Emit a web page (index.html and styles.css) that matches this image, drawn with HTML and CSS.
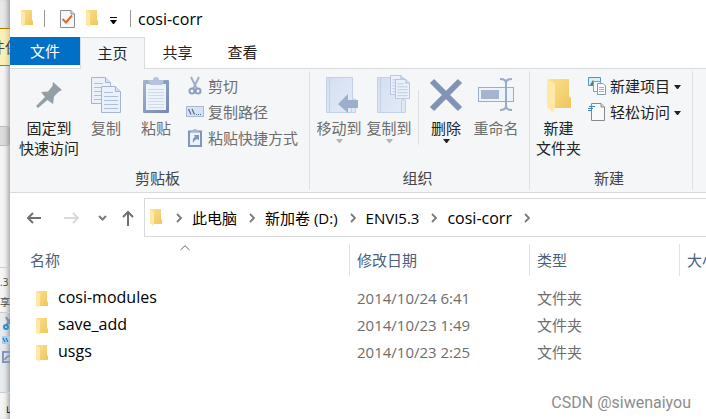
FILE: index.html
```
<!DOCTYPE html>
<html lang="zh-CN">
<head>
  <meta charset="UTF-8">
  <title>cosi-corr</title>
  <link rel="stylesheet" href="styles.css">
</head>
<body>

  <!-- 共用图标 -->
  <svg class="defs" width="0" height="0">
    <defs>
      <linearGradient id="gold" x1="0" y1="0" x2="1" y2="1">
        <stop offset="0" stop-color="#fce18e"/>
        <stop offset="1" stop-color="#efc55e"/>
      </linearGradient>
      <linearGradient id="board" x1="0" y1="0" x2="1" y2="1">
        <stop offset="0" stop-color="#a3b4d1"/>
        <stop offset="1" stop-color="#7488ae"/>
      </linearGradient>
      <linearGradient id="pale" x1="0" y1="0" x2="1" y2="1">
        <stop offset="0" stop-color="#d3dff2"/>
        <stop offset="1" stop-color="#e2eaf6"/>
      </linearGradient>
      <symbol id="folder" viewBox="0 0 12 17">
        <path d="M0 0H11V10L12 11V15H3L0 15Z" fill="url(#gold)"/>
        <path d="M0 0L4 3V13L3 17L0 14Z" fill="#ffe9a6"/>
      </symbol>
      <symbol id="chevron" viewBox="0 0 6 10">
        <path d="M1 1L5 5L1 9" fill="none" stroke="#7a7a7a" stroke-width="1.8"/>
      </symbol>
      <symbol id="drop" viewBox="0 0 7 4">
        <path d="M0 0H7L4 4H3Z" fill="currentColor"/>
      </symbol>
      <symbol id="page" viewBox="0 0 20 27">
        <path d="M.5 .5H14.500L19.500 5.500V26.500H.5Z" fill="#eaf1fb" stroke="#a3b5d1"/>
        <path d="M14.500 .5V5.500H19.500" fill="#d5e0f0" stroke="#a3b5d1"/>
        <path d="M3 6.500H12M3 10.500H17M3 14.500H17M3 18.500H17M3 22.500H17" stroke="#aebfd8"/>
      </symbol>
    </defs>
  </svg>

  <!-- 后面的窗口 -->
  <div class="behind">
    <div class="behind-top"></div>
    <div class="behind-note">件保</div>
    <div class="behind-body"></div>
    <div class="behind-bar"></div>
    <div class="behind-page"></div>
    <div class="behind-title"><span>.3</span><span>享</span></div>
    <div class="behind-tools">
      <svg width="8" height="13" viewBox="0 0 8 13"><path d="M4 0L8 7M8 2L4 9" stroke="#7c8ba0" stroke-width="2"/><circle cx="4" cy="10" r="2" fill="none" stroke="#2f8ccc" stroke-width="2"/></svg>
      <svg width="8" height="8" viewBox="0 0 8 8"><rect width="8" height="8" fill="#9fd0ee"/><path d="M1 2L3 6M4 2L6 6" stroke="#315a80"/></svg>
      <svg width="8" height="13" viewBox="0 0 8 13"><path d="M8 2H1V12H8M3 10Q4 6 8 6" fill="none" stroke="#8294bb" stroke-width="2"/></svg>
    </div>
    <div class="behind-foot">山</div>
  </div>

  <div class="window">

    <div class="titlebar">
      <svg width="12" height="17"><use href="#folder"/></svg>
      <span class="title-sep"></span>
      <svg class="check" width="15" height="18" viewBox="0 0 15 18">
        <path d="M.5 .5H11L14.500 4V17.500H.5Z" fill="#f7f8f8" stroke="#8a8f94"/>
        <path d="M11 .5V4H14.500" fill="#ddd" stroke="#8a8f94"/>
        <path d="M2.500 9L6 12.500L12 5.500" fill="none" stroke="#e8642c" stroke-width="2"/>
      </svg>
      <svg width="12" height="17"><use href="#folder"/></svg>
      <svg class="customize" width="7" height="7" viewBox="0 0 7 7"><path d="M0 .5H7" stroke="#000"/><path d="M0 3H7L4 7H3Z"/></svg>
      <span class="title-sep"></span>
      <span class="path-name">cosi-corr</span>
    </div>

    <div class="tabs">
      <button class="tab tab-file">文件</button>
      <button class="tab tab-active">主页</button>
      <button class="tab">共享</button>
      <button class="tab">查看</button>
    </div>

    <div class="ribbon">
      <div class="group group-clipboard">
        <div class="tools">
          <button class="big dark pin">
            <svg width="26" height="36" viewBox="0 0 26 36">
              <path d="M17 5L26 13L23 14.500L18 19.500L17 27L11.500 23L2 31L0 29L9 20L5 15L12 14.500L16.500 9Z" fill="#949fa5"/>
            </svg>
            <span>固定到<br>快速访问</span>
          </button>
          <button class="big">
            <svg width="30" height="36" viewBox="0 0 30 36">
              <use href="#page" width="20" height="27"/>
              <use href="#page" x="10" y="9" width="20" height="27"/>
            </svg>
            <span>复制</span>
          </button>
          <button class="big">
            <svg width="26" height="36" viewBox="0 0 26 36">
              <rect y="3" width="26" height="33" rx="1" fill="url(#board)"/>
              <rect x="3" y="7" width="20" height="26" fill="#edf3fb"/>
              <path d="M5 12.500H21M5 15.500H21M5 18.500H21M5 21.500H21M5 24.500H21M5 27.500H21M5 30.500H21" stroke="#cddaea"/>
              <path d="M5 3H10Q10 0 13 0T16 3H21L19 8H7Z" fill="#b4c4dc"/>
            </svg>
            <span>粘贴</span>
          </button>
          <div class="small-list">
            <button class="small">
              <svg width="18" height="18" viewBox="0 0 18 18">
                <path d="M5 0L11 12M13 0L7 12" stroke="#9fb0c9" stroke-width="2"/>
                <circle cx="6" cy="14" r="2.500" fill="none" stroke="#8c9fc0" stroke-width="2"/>
                <circle cx="12" cy="14" r="2.500" fill="none" stroke="#8c9fc0" stroke-width="2"/>
              </svg>剪切
            </button>
            <button class="small">
              <svg width="18" height="18" viewBox="0 0 18 18">
                <rect x=".5" y="3.500" width="17" height="10" fill="#d5e3f4" stroke="#a9bad3"/>
                <path d="M2.500 6L5 11.500M6 6L8.500 11.500M10 11.500H11M12 11.500H13M14 11.500H15" stroke="#566b8e" stroke-width="1.200"/>
              </svg>复制路径
            </button>
            <button class="small">
              <svg width="18" height="18" viewBox="0 0 18 18">
                <rect x="3" y="2.500" width="12" height="14.500" fill="#edf3fb" stroke="#8196bb" stroke-width="2"/>
                <path d="M5 3Q9-3 13 3Z" fill="#a5b7d3"/>
                <path d="M7 14Q6 9 9 8L8 6H13V11L11 10Q8 11 7 14Z" fill="#8196bb"/>
              </svg>粘贴快捷方式
            </button>
          </div>
        </div>
        <div class="group-name">剪贴板</div>
      </div>

      <div class="group group-organize">
        <div class="tools">
          <button class="big">
            <svg width="38" height="36" viewBox="-6 0 38 36">
              <path d="M.5 .5H26.500V35.500H.5Z" fill="url(#pale)" stroke="#c3d1e8"/>
              <path d="M3.500 1V35M25.500 35V24Q25.500 21 29.500 22V35.500H25.500" fill="#dfe8f5" stroke="#c3d1e8"/>
              <path d="M12 27L22 17V23H32V31H22V36Z" fill="#9caecb"/>
            </svg>
            <span>移动到</span>
            <svg class="drop" width="7" height="4"><use href="#drop"/></svg>
          </button>
          <button class="big">
            <svg width="44" height="36" viewBox="-10 2 44 36">
              <path d="M.5 2.500H26.500V37.500H.5Z" fill="url(#pale)" stroke="#c3d1e8"/>
              <path d="M3.500 3V37M24.500 37V26Q24.500 24 28.500 25V37.500H24.500" fill="#dfe8f5" stroke="#c3d1e8"/>
              <use href="#page" x="13" width="15" height="20"/>
              <use href="#page" x="18" y="4" width="15" height="20"/>
            </svg>
            <span>复制到</span>
            <svg class="drop" width="7" height="4"><use href="#drop"/></svg>
          </button>
          <span class="tool-sep"></span>
          <button class="big dark">
            <svg width="32" height="36" viewBox="0 0 32 36"><path d="M2 4L30 32M30 4L2 32" stroke="#8294b5" stroke-width="6"/></svg>
            <span>删除</span>
            <svg class="drop" width="7" height="4"><use href="#drop"/></svg>
          </button>
          <button class="big">
            <svg width="36" height="36" viewBox="0 0 36 36">
              <rect x=".5" y="10.500" width="35" height="14" fill="#edf3fb" stroke="#9badc9"/>
              <rect x="3" y="13" width="18" height="9" fill="#a5b5d0"/>
              <path d="M22 2Q28 2 28 6Q28 2 34 2M28 5V30M22 33Q28 33 28 29Q28 33 34 33" fill="none" stroke="#9aabc7" stroke-width="2"/>
            </svg>
            <span>重命名</span>
          </button>
        </div>
        <div class="group-name">组织</div>
      </div>

      <div class="group group-new">
        <div class="tools">
          <button class="big dark">
            <svg width="24" height="36" viewBox="0 0 24 36">
              <path d="M1 2H22V19L24 21V31H1Z" fill="url(#gold)"/>
              <path d="M0 2L8 7V29L6 36L0 30Z" fill="#ffe9a6"/>
            </svg>
            <span>新建<br>文件夹</span>
          </button>
          <div class="small-list">
            <button class="small dark">
              <svg width="18" height="18" viewBox="0 0 18 18">
                <path d="M.5 .5H12.500V8.500H.5Z" fill="#d8eef9" stroke="#4d97bd"/>
                <path d="M2 8L5 3L8 8Z" fill="#517a71"/>
                <path d="M5.500 4.500H12.500V14.500H5.500Z" fill="#f5f9fc" stroke="#75a4bd"/>
                <path d="M9.500 6.500H15L17.500 9V17.500H9.500Z" fill="#fff" stroke="#8b979f"/>
                <path d="M11 10.500H16M11 12.500H16M11 14.500H16" stroke="#9ab4cd"/>
              </svg>新建项目
              <svg class="drop" width="7" height="4"><use href="#drop"/></svg>
            </button>
            <button class="small dark">
              <svg width="18" height="18" viewBox="0 0 18 18">
                <path d="M3.500 .5H13L16.500 4V17.500H3.500Z" fill="#fafafa" stroke="#868a8e"/>
                <path d="M13 .5V4H16.500" fill="#ddd" stroke="#868a8e"/>
                <path d="M1 3.500H7M0 5.500H5M0 7.500H4" stroke="#3e81b6"/>
              </svg>轻松访问
              <svg class="drop" width="7" height="4"><use href="#drop"/></svg>
            </button>
          </div>
        </div>
        <div class="group-name">新建</div>
      </div>
    </div>

    <!-- 地址栏 -->
    <div class="nav">
      <button class="nav-btn" aria-label="后退"><svg width="16" height="12" viewBox="0 0 16 12"><path d="M15 6H2M7 1L2 6L7 11" fill="none" stroke="#717171" stroke-width="2"/></svg></button>
      <button class="nav-btn" aria-label="前进"><svg width="16" height="12" viewBox="0 0 16 12"><path d="M0 6H14M9 1L14 6L9 11" fill="none" stroke="#d9d9d9" stroke-width="2"/></svg></button>
      <button class="nav-btn nav-recent" aria-label="最近位置"><svg width="9" height="6" viewBox="0 0 9 6"><path d="M1 1L4.500 4.500L8 1" fill="none" stroke="#7d7d7d" stroke-width="2"/></svg></button>
      <button class="nav-btn nav-up" aria-label="向上"><svg width="12" height="16" viewBox="0 0 12 16"><path d="M6 16V2M1 7L6 2L11 7" fill="none" stroke="#717171" stroke-width="2"/></svg></button>
      <div class="address">
        <svg width="12" height="17"><use href="#folder"/></svg>
        <svg class="chev" width="6" height="10"><use href="#chevron"/></svg>
        <a href="#">此电脑</a>
        <svg class="chev" width="6" height="10"><use href="#chevron"/></svg>
        <a href="#">新加卷 (D:)</a>
        <svg class="chev" width="6" height="10"><use href="#chevron"/></svg>
        <a href="#">ENVI5.3</a>
        <svg class="chev" width="6" height="10"><use href="#chevron"/></svg>
        <a href="#" class="path-name">cosi-corr</a>
        <svg class="chev" width="6" height="10"><use href="#chevron"/></svg>
      </div>
    </div>

    <table class="files">
      <colgroup><col class="col-name"><col class="col-date"><col class="col-type"><col></colgroup>
      <thead>
        <tr>
          <th>名称<svg class="sort" width="10" height="6" viewBox="0 0 10 6"><path d="M.5 5L5 .7L9.500 5" fill="none" stroke="#6b6b6b"/></svg></th>
          <th>修改日期</th>
          <th>类型</th>
          <th>大小</th>
        </tr>
      </thead>
      <tbody>
        <tr><td class="path-name"><svg width="12" height="17"><use href="#folder"/></svg>cosi-modules</td><td>2014/10/24 6:41</td><td>文件夹</td><td></td></tr>
        <tr><td class="path-name"><svg width="12" height="17"><use href="#folder"/></svg>save_add</td><td>2014/10/23 1:49</td><td>文件夹</td><td></td></tr>
        <tr><td class="path-name"><svg width="12" height="17"><use href="#folder"/></svg>usgs</td><td>2014/10/23 2:25</td><td>文件夹</td><td></td></tr>
      </tbody>
    </table>

    <div class="watermark">CSDN @siwenaiyou</div>
  </div>

</body>
</html>
```
FILE: styles.css
```
* { box-sizing: border-box; }

body {
  margin: 0;
  height: 100vh;
  display: flex;
  overflow: hidden;
  background: #fff;
  color: #000;
  font: 15px/20px "Open Sans", "Noto Sans CJK SC", sans-serif;
}

svg { display: block; flex: none; overflow: visible; }

.defs { position: absolute; }

button {
  margin: 0;
  padding: 0;
  border: none;
  background: none;
  color: inherit;
  font: inherit;
}

.path-name { font-size: 16px; }

/* 后面的窗口 */
.behind {
  flex: none;
  width: 10px;
  display: flex;
  flex-direction: column;
  overflow: hidden;
  background: #f5f5f5;
  box-shadow: inset -5px 0 5px -3px rgba(0,0,0,0.35);
}

.behind-top { height: 28px; background: rgba(0,0,0,0.05); }

.behind-note {
  height: 38px;
  display: flex;
  align-items: center;
  justify-content: center;
  border: solid #ab7a00;
  border-width: 1px 0;
  background: rgba(255,236,120,0.5);
  color: #444;
  white-space: nowrap;
}

.behind-body { height: 60px; }

.behind-bar {
  height: 20px;
  border: solid #bbb;
  border-width: 1px 0;
  background: rgba(0,0,0,0.1);
}

.behind-page { height: 122px; }

.behind-title {
  height: 46px;
  display: flex;
  flex-direction: column;
  align-items: flex-start;
  padding-top: 4px;
  border: solid #ccc;
  border-width: 1px 0;
  color: #444;
  font-size: 10px;
  white-space: nowrap;
}

.behind-tools {
  height: 79px;
  display: flex;
  flex-direction: column;
  align-items: flex-end;
  gap: 6px;
  padding-top: 4px;
  background: rgba(40,80,130,0.06);
}

.behind-foot {
  flex: 1;
  padding: 6px 0 0 6px;
  border-top: 1px solid #ccc;
  font-size: 10px;
}

/* 资源管理器窗口 */
.window {
  position: relative;
  flex: 1;
  min-width: 0;
  background: #fff;
}

.titlebar {
  height: 37px;
  display: flex;
  align-items: center;
  padding-left: 11px;
}

.title-sep {
  width: 1px;
  height: 17px;
  margin: 0 7px 0 11px;
  background: #999;
}

.check { margin: 0 11px 0 8px; }
.customize { margin: 4px 2px 0 12px; }

.tabs {
  height: 31px;
  display: flex;
}

.tab {
  height: 29px;
  width: 65px;
  color: #222;
}

.tab-file {
  width: 70px;
  height: 28px;
  background: #0070c6;
  color: #fff;
}

.tab-active {
  height: 32px;
  padding-bottom: 2px;
  z-index: 1;
  border: 1px solid #d9dbdd;
  border-bottom: none;
  background: #f4f6f8;
}

.ribbon {
  display: flex;
  height: 125px;
  padding: 2px 0;
  border: solid #d9dbdd;
  border-width: 1px 0;
  background: #f4f6f8;
}

.group {
  flex: none;
  display: flex;
  flex-direction: column;
  justify-content: space-between;
  border-right: 1px solid #dfe1e4;
}

.group-clipboard { width: 300px; }
.group-organize { width: 220px; }
.group-new { width: 163px; }

.tools {
  display: flex;
  align-items: flex-start;
  padding-left: 6px;
}

.group-clipboard .tools { padding-left: 9px; }

.group-name {
  padding: 0 4px 2px 0;
  color: #444;
  text-align: center;
}

.big {
  display: flex;
  flex-direction: column;
  align-items: center;
  width: 50px;
  padding-top: 5px;
  color: #6d6d6d;
  white-space: nowrap;
}

.big > svg:first-child { height: 38px; padding: 1px 0; }
.big > span { margin-top: 4px; }

.pin { width: 60px; margin-right: 2px; }
.group-organize .big:first-child { margin-left: -2px; }
.group-new .big { width: 45px; }

.dark { color: #222; }

.drop { margin-top: 1px; color: #222; }
.big:not(.dark) .drop { color: #b5b5b5; }

.tool-sep {
  width: 1px;
  height: 55px;
  margin: 19px 2px 0 4px;
  background: #dfe1e4;
}

.small-list {
  display: flex;
  flex-direction: column;
  gap: 6px;
  padding: 5px 0 0 5px;
}

.group-new .small-list { padding-left: 7px; }

.small {
  display: flex;
  align-items: center;
  gap: 4px;
  color: #6d6d6d;
  white-space: nowrap;
}

.small.dark { color: #222; }

/* 地址栏 */
.nav {
  display: flex;
  align-items: center;
  padding: 5px 0 7px 16px;
}

.nav-btn { width: 16px; margin-right: 22px; }
.nav-recent { width: 9px; margin: 0 15px 0 -4px; }
.nav-up { width: 12px; margin-right: 10px; }

.address {
  flex: 1;
  height: 39px;
  display: flex;
  align-items: center;
  padding-left: 5px;
  border: 1px solid #d9d9d9;
  border-right: none;
  white-space: nowrap;
}

.address a { color: #000; text-decoration: none; }

.chev { margin: 0 10px 0 12px; }
.address svg:first-child { margin-right: 2px; }

/* 文件列表 */
.files {
  width: 100%;
  table-layout: fixed;
  border-collapse: separate;
  border-spacing: 0;
}

.col-name { width: 340px; }
.col-date { width: 180px; }
.col-type { width: 150px; }

.files th {
  position: relative;
  height: 32px;
  padding: 0 0 0 7px;
  border-right: 1px solid #e2e2e2;
  color: #4c607a;
  font-weight: normal;
  text-align: left;
  white-space: nowrap;
  overflow: hidden;
}

.files th:first-child { padding-left: 20px; }
.files th:last-child { border-right: none; }

.sort {
  position: absolute;
  top: 1px;
  left: 50%;
}

.files tbody::before {
  content: "";
  display: block;
  height: 8px;
}

.files td {
  height: 27px;
  padding: 0 0 0 7px;
  color: #6d6d6d;
}

.files td:first-child { padding-left: 26px; color: #000; }

.files td svg {
  display: inline-block;
  margin-right: 10px;
  vertical-align: middle;
}

.watermark {
  position: absolute;
  right: 15px;
  bottom: 6px;
  color: #8c8c8c;
  font: 16px/20px Roboto, sans-serif;
}
```
